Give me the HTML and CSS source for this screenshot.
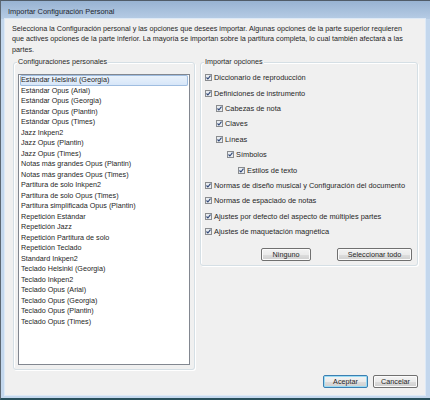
FILE: index.html
```html
<!DOCTYPE html>
<html lang="es">
<head>
<meta charset="utf-8">
<title>Importar Configuración Personal</title>
<link rel="stylesheet" href="styles.css">
</head>
<body>
<div class="window">
  <div class="titlebar">Importar Configuración Personal</div>
  <div class="client">
    <p class="intro">Selecciona la Configuración personal y las opciones que desees importar. Algunas opciones de la parte superior requieren<br>que actives opciones de la parte inferior. La mayoría se importan sobre la partitura completa, lo cual también afectará a las<br>partes.</p>
    <div class="groups">
      <div class="group group-left">
        <span class="group-title">Configuraciones personales</span>
        <ul class="listbox">
          <li class="selected">Estándar Helsinki (Georgia)</li>
          <li>Estándar Opus (Arial)</li>
          <li>Estándar Opus (Georgia)</li>
          <li>Estándar Opus (Plantin)</li>
          <li>Estándar Opus (Times)</li>
          <li>Jazz Inkpen2</li>
          <li>Jazz Opus (Plantin)</li>
          <li>Jazz Opus (Times)</li>
          <li>Notas más grandes Opus (Plantin)</li>
          <li>Notas más grandes Opus (Times)</li>
          <li>Partitura de solo Inkpen2</li>
          <li>Partitura de solo Opus (Times)</li>
          <li>Partitura simplificada Opus (Plantin)</li>
          <li>Repetición Estándar</li>
          <li>Repetición Jazz</li>
          <li>Repetición Partitura de solo</li>
          <li>Repetición Teclado</li>
          <li>Standard Inkpen2</li>
          <li>Teclado Helsinki (Georgia)</li>
          <li>Teclado Inkpen2</li>
          <li>Teclado Opus (Arial)</li>
          <li>Teclado Opus (Georgia)</li>
          <li>Teclado Opus (Plantin)</li>
          <li>Teclado Opus (Times)</li>
        </ul>
      </div>
      <div class="group group-right">
        <span class="group-title">Importar opciones</span>
        <ul class="options">
          <li class="lvl0"><svg class="check" viewBox="0 0 7 7"><rect x="0.5" y="0.5" width="6" height="6" fill="#e8ecf0" stroke="#8a8c8f"/><path d="M1.5 3.5 L2.9 5 L5.5 1.7" fill="none" stroke="#2f4677" stroke-width="1.1"/></svg>Diccionario de reproducción</li>
          <li class="lvl0"><svg class="check" viewBox="0 0 7 7"><rect x="0.5" y="0.5" width="6" height="6" fill="#e8ecf0" stroke="#8a8c8f"/><path d="M1.5 3.5 L2.9 5 L5.5 1.7" fill="none" stroke="#2f4677" stroke-width="1.1"/></svg>Definiciones de instrumento</li>
          <li class="lvl1"><svg class="check" viewBox="0 0 7 7"><rect x="0.5" y="0.5" width="6" height="6" fill="#e8ecf0" stroke="#8a8c8f"/><path d="M1.5 3.5 L2.9 5 L5.5 1.7" fill="none" stroke="#2f4677" stroke-width="1.1"/></svg>Cabezas de nota</li>
          <li class="lvl1"><svg class="check" viewBox="0 0 7 7"><rect x="0.5" y="0.5" width="6" height="6" fill="#e8ecf0" stroke="#8a8c8f"/><path d="M1.5 3.5 L2.9 5 L5.5 1.7" fill="none" stroke="#2f4677" stroke-width="1.1"/></svg>Claves</li>
          <li class="lvl1"><svg class="check" viewBox="0 0 7 7"><rect x="0.5" y="0.5" width="6" height="6" fill="#e8ecf0" stroke="#8a8c8f"/><path d="M1.5 3.5 L2.9 5 L5.5 1.7" fill="none" stroke="#2f4677" stroke-width="1.1"/></svg>Líneas</li>
          <li class="lvl2"><svg class="check" viewBox="0 0 7 7"><rect x="0.5" y="0.5" width="6" height="6" fill="#e8ecf0" stroke="#8a8c8f"/><path d="M1.5 3.5 L2.9 5 L5.5 1.7" fill="none" stroke="#2f4677" stroke-width="1.1"/></svg>Símbolos</li>
          <li class="lvl3"><svg class="check" viewBox="0 0 7 7"><rect x="0.5" y="0.5" width="6" height="6" fill="#e8ecf0" stroke="#8a8c8f"/><path d="M1.5 3.5 L2.9 5 L5.5 1.7" fill="none" stroke="#2f4677" stroke-width="1.1"/></svg>Estilos de texto</li>
          <li class="lvl0"><svg class="check" viewBox="0 0 7 7"><rect x="0.5" y="0.5" width="6" height="6" fill="#e8ecf0" stroke="#8a8c8f"/><path d="M1.5 3.5 L2.9 5 L5.5 1.7" fill="none" stroke="#2f4677" stroke-width="1.1"/></svg>Normas de diseño musical y Configuración del documento</li>
          <li class="lvl0"><svg class="check" viewBox="0 0 7 7"><rect x="0.5" y="0.5" width="6" height="6" fill="#e8ecf0" stroke="#8a8c8f"/><path d="M1.5 3.5 L2.9 5 L5.5 1.7" fill="none" stroke="#2f4677" stroke-width="1.1"/></svg>Normas de espaciado de notas</li>
          <li class="lvl0"><svg class="check" viewBox="0 0 7 7"><rect x="0.5" y="0.5" width="6" height="6" fill="#e8ecf0" stroke="#8a8c8f"/><path d="M1.5 3.5 L2.9 5 L5.5 1.7" fill="none" stroke="#2f4677" stroke-width="1.1"/></svg>Ajustes por defecto del aspecto de múltiples partes</li>
          <li class="lvl0"><svg class="check" viewBox="0 0 7 7"><rect x="0.5" y="0.5" width="6" height="6" fill="#e8ecf0" stroke="#8a8c8f"/><path d="M1.5 3.5 L2.9 5 L5.5 1.7" fill="none" stroke="#2f4677" stroke-width="1.1"/></svg>Ajustes de maquetación magnética</li>
        </ul>
        <div class="group-buttons">
          <button class="btn btn-none">Ninguno</button>
          <button class="btn btn-all">Seleccionar todo</button>
        </div>
      </div>
    </div>
    <div class="footer">
      <button class="btn btn-default">Aceptar</button>
      <button class="btn">Cancelar</button>
    </div>
  </div>
</div>
</body>
</html>
```

FILE: styles.css
```css
* {
  box-sizing: border-box;
}

html,
body {
  margin: 0;
  padding: 0;
}

body {
  width: 430px;
  height: 400px;
  overflow: hidden;
  background: #2a5360;
  font-family: "Liberation Sans", Arial, sans-serif;
  font-size: 7.2px;
  color: #262626;
}

.window {
  width: 430px;
  height: 400px;
  display: flex;
  flex-direction: column;
  border-top: 1px solid #505c68;
  border-left: 1px solid #5d6873;
  border-bottom: 2px solid #28505c;
  background: #c3d7ed;
}

.titlebar {
  flex: none;
  height: 18px;
  padding: 4px 0 0 7px;
  line-height: 14px;
  font-size: 7.4px;
  color: #1e2630;
  background: linear-gradient(to bottom, #98b3d2, #b6cce5);
}

.client {
  flex: 1;
  margin: 0 5px 3px 4px;
  background: #f0f0f0;
  display: flex;
  flex-direction: column;
  box-shadow: 0 0 0 1px #dde9f6;
}

.intro {
  margin: 0;
  padding: 5px 0 0 7px;
  line-height: 10.4px;
  white-space: nowrap;
}

.groups {
  display: flex;
  align-items: flex-start;
  gap: 5px;
  margin: 6.8px 7px 0 8px;
}

.group {
  position: relative;
  border: 1px solid #d5dfe5;
  border-radius: 3px;
  box-shadow: inset 1px 1px 0 #fff, 1px 1px 0 #fff;
}

.group-title {
  position: absolute;
  top: -6px;
  left: 3px;
  padding: 0 1px;
  line-height: 9px;
  font-size: 7.2px;
  background: #f0f0f0;
  color: #2a2a2a;
  white-space: nowrap;
}

.group-left {
  width: 182px;
  height: 308px;
  padding: 11px 4px 4px 4px;
}

.listbox {
  list-style: none;
  margin: 0;
  padding: 0 1px;
  height: 100%;
  background: #fff;
  border: 1px solid #828790;
}

.listbox li {
  height: 10.5px;
  line-height: 10.5px;
  padding-left: 1px;
  white-space: nowrap;
}

.listbox li.selected {
  background: linear-gradient(#ebf3fc, #d5e5f8);
  box-shadow: inset 0 0 0 1px #9fbde0;
  border-radius: 2px;
}

.group-right {
  width: 218px;
  height: 204px;
  padding: 7px 5px 4px 4px;
  display: flex;
  flex-direction: column;
  font-size: 7.4px;
}

.options {
  list-style: none;
  margin: 0;
  padding: 0;
}

.options li {
  height: 15.4px;
  display: flex;
  align-items: center;
  gap: 2px;
  white-space: nowrap;
}

.options .check {
  width: 7px;
  height: 7px;
  flex: none;
}

.options .lvl1 {
  padding-left: 11px;
}

.options .lvl2 {
  padding-left: 22px;
}

.options .lvl3 {
  padding-left: 33px;
}

.group-buttons {
  margin-top: auto;
  display: flex;
  justify-content: flex-end;
  gap: 26px;
}

.btn {
  height: 13px;
  padding: 0;
  margin: 0;
  font: inherit;
  font-size: 7.2px;
  line-height: 11px;
  color: #262626;
  border: 1px solid #707070;
  border-radius: 2px;
  background: linear-gradient(#f3f3f3 0%, #ebebeb 50%, #dddddd 51%, #cfcfcf 100%);
  box-shadow: inset 0 0 0 1px #fbfbfb;
}

.btn-none {
  width: 50px;
}

.btn-all {
  width: 75px;
}

.footer {
  display: flex;
  justify-content: flex-end;
  gap: 5px;
  margin: 5px 7px 0 0;
}

.footer .btn {
  width: 45px;
}

.footer .btn-default {
  border-color: #3c7fb1;
  box-shadow: inset 0 0 0 1px #9adcf5;
}
```
